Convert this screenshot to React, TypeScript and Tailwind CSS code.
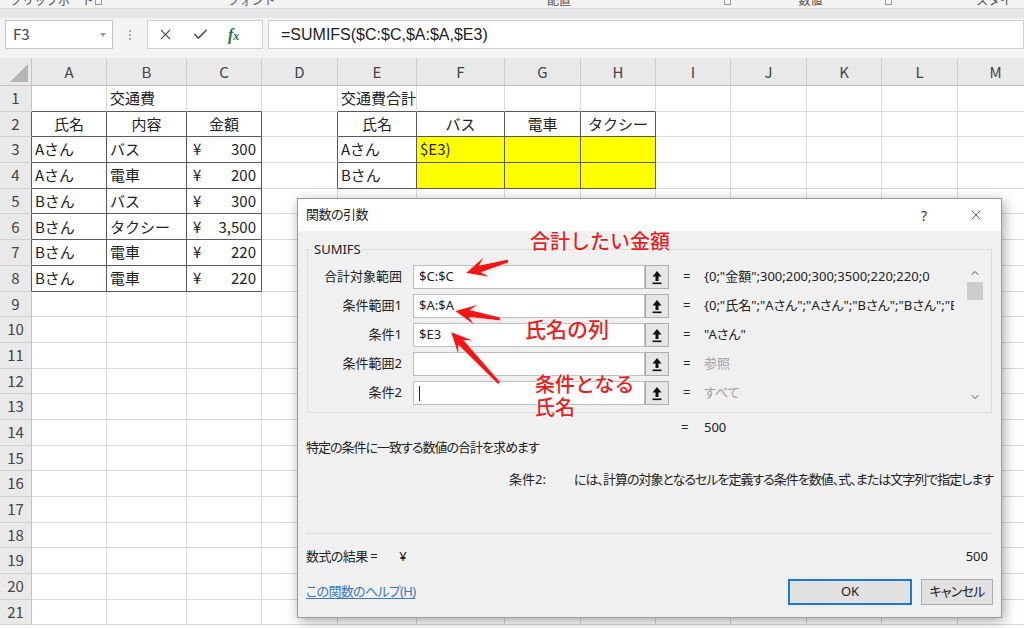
import clsx from "clsx";
import { Check, ChevronDown, ChevronUp, X } from "lucide-react";

const GRID =
  "grid grid-cols-[32px_75px_80px_75px_76px_79px_88px_76px_75px_75px_76px_75px_76px_76px]";
const LETTERS = ["A", "B", "C", "D", "E", "F", "G", "H", "I", "J", "K", "L", "M"];

type CellData = { t?: string; align?: "c" | "r"; yen?: string };

const DATA: Record<string, CellData> = {
  B1: { t: "交通費" },
  E1: { t: "交通費合計" },
  A2: { t: "氏名", align: "c" },
  B2: { t: "内容", align: "c" },
  C2: { t: "金額", align: "c" },
  E2: { t: "氏名", align: "c" },
  F2: { t: "バス", align: "c" },
  G2: { t: "電車", align: "c" },
  H2: { t: "タクシー", align: "c" },
  A3: { t: "Aさん" },
  B3: { t: "バス" },
  C3: { yen: "300" },
  A4: { t: "Aさん" },
  B4: { t: "電車" },
  C4: { yen: "200" },
  A5: { t: "Bさん" },
  B5: { t: "バス" },
  C5: { yen: "300" },
  A6: { t: "Bさん" },
  B6: { t: "タクシー" },
  C6: { yen: "3,500" },
  A7: { t: "Bさん" },
  B7: { t: "電車" },
  C7: { yen: "220" },
  A8: { t: "Bさん" },
  B8: { t: "電車" },
  C8: { yen: "220" },
  E3: { t: "Aさん" },
  F3: { t: "$E3)" },
  E4: { t: "Bさん" },
};

// bordered tables: A2:C8 and E2:H4
const inBox = (c: number, r: number) =>
  (c >= 1 && c <= 3 && r >= 2 && r <= 8) || (c >= 5 && c <= 8 && r >= 2 && r <= 4);
const isYellow = (c: number, r: number) => c >= 6 && c <= 8 && r >= 3 && r <= 4;

const ARGS = [
  { label: "合計対象範囲", input: "$C:$C", value: '{0;"金額";300;200;300;3500;220;220;0' },
  { label: "条件範囲1", input: "$A:$A", value: '{0;"氏名";"Aさん";"Aさん";"Bさん";"Bさん";"B' },
  { label: "条件1", input: "$E3", value: '"Aさん"' },
  { label: "条件範囲2", input: "", value: "参照", muted: true },
  { label: "条件2", input: "", value: "すべて", muted: true, caret: true },
];

function RibbonStrip() {
  return (
    <div className="h-[8px] overflow-hidden flex bg-[#f3f3f3] text-[12px] leading-[16px] text-[#555]">
      <span className="ml-[10px] w-[85px] -mt-[8px]">クリップボード</span>
      <span className="w-[133px] -mt-[8px]">
        <span className="inline-block w-[7px] h-[7px] border border-[#999]" />
      </span>
      <span className="w-[320px] -mt-[8px]">フォント</span>
      <span className="w-[177px] -mt-[8px]">配置</span>
      <span className="w-[75px] -mt-[8px]">
        <span className="inline-block w-[7px] h-[7px] border border-[#999]" />
      </span>
      <span className="w-[87px] -mt-[8px]">数値</span>
      <span className="w-[91px] -mt-[8px]">
        <span className="inline-block w-[7px] h-[7px] border border-[#999]" />
      </span>
      <span className="-mt-[8px]">スタイル</span>
    </div>
  );
}

function FormulaBar() {
  return (
    <div className="h-[34px] bg-[#f3f3f3] flex items-start pt-[2px]">
      <div className="ml-[5px] w-[108px] h-[29px] bg-white border border-[#c6c6c6] flex items-center justify-between pl-[7px] pr-[6px] text-[15px] text-[#444]">
        <span>F3</span>
        <span className="w-0 h-0 border-l-[3px] border-r-[3px] border-t-[4px] border-l-transparent border-r-transparent border-t-[#999]" />
      </div>
      <div className="w-[34px] h-[29px] flex flex-col items-center justify-center gap-[2px]">
        <span className="w-[2px] h-[2px] bg-[#aaa]" />
        <span className="w-[2px] h-[2px] bg-[#aaa]" />
        <span className="w-[2px] h-[2px] bg-[#aaa]" />
      </div>
      <div className="w-[116px] h-[29px] bg-white border border-[#d0d0d0] flex items-center pl-[9px]">
        <X size={17} strokeWidth={1.6} className="text-[#555]" />
        <Check size={17} strokeWidth={2.4} className="text-[#555] ml-[18px]" />
        <span className="ml-[19px] font-['Liberation_Serif',serif] italic text-[16px] text-[#217346] font-bold">
          f<span className="text-[12px]">x</span>
        </span>
      </div>
      <div className="ml-[5px] flex-1 h-[29px] bg-white border border-[#d0d0d0] flex items-center pl-[12px] text-[16px] text-[#222] font-['Liberation_Sans','Noto_Sans_CJK_JP',sans-serif]">
        =SUMIFS($C:$C,$A:$A,$E3)
      </div>
    </div>
  );
}

function HeaderRow() {
  return (
    <div className={GRID}>
      <div className="h-[28px] bg-[#e9e9e9] border-r border-b border-[#c4c4c4] flex items-end justify-end pr-[3px] pb-[3px]">
        <span className="w-0 h-0 border-l-[18px] border-t-[18px] border-l-transparent border-t-transparent border-b-0 border-r-[0px] border-b-[#b5b5b5] [border-bottom-width:18px]" />
      </div>
      {LETTERS.map((L) => (
        <div
          key={L}
          className="h-[28px] bg-[#e9e9e9] border-r border-r-[#cdcdcd] border-b border-b-[#b9b9b9] flex items-center justify-center pt-[2px] text-[15px] text-[#444]"
        >
          {L}
        </div>
      ))}
    </div>
  );
}

function Cell({ c, r }: { c: number; r: number }) {
  const d = DATA[LETTERS[c - 1] + r];
  const right = inBox(c, r) || inBox(c + 1, r);
  const bottom = inBox(c, r) || inBox(c, r + 1);
  return (
    <div
      className={clsx(
        "h-[25.7px] border-r border-b flex items-center whitespace-nowrap text-[15px] text-[#222]",
        right ? "border-r-[#595959]" : "border-r-[#dadada]",
        bottom ? "border-b-[#595959]" : "border-b-[#dadada]",
        isYellow(c, r) ? "bg-[#ffff00]" : "bg-white",
        d?.align === "c" ? "justify-center" : d?.yen ? "justify-between pl-[6px] pr-[5px]" : "pl-[3px]"
      )}
    >
      {d?.yen ? (
        <>
          <span>¥</span>
          <span>{d.yen}</span>
        </>
      ) : (
        d?.t
      )}
    </div>
  );
}

function SheetRow({ r }: { r: number }) {
  return (
    <div className={GRID}>
      <div
        className={clsx(
          "h-[25.7px] bg-[#e9e9e9] border-b border-b-[#d0d0d0] border-r flex items-center justify-center text-[15px] text-[#444]",
          inBox(1, r) ? "border-r-[#595959]" : "border-r-[#c4c4c4]"
        )}
      >
        {r}
      </div>
      {LETTERS.map((L, i) => (
        <Cell key={L} c={i + 1} r={r} />
      ))}
    </div>
  );
}

function RefIcon() {
  return (
    <svg width="10" height="15" viewBox="0 0 10 15">
      <polygon points="5,1 9.5,6.5 6.5,6.5 6.5,11 3.5,11 3.5,6.5 0.5,6.5" fill="#111" />
      <rect x="0.5" y="12.5" width="9" height="1.6" fill="#111" />
    </svg>
  );
}

function Dialog() {
  return (
    <div className="absolute left-[297px] top-[198px] w-[705px] h-[420px] bg-[#f0f0f0] border border-[#9a9a9a] shadow-[2px_3px_12px_rgba(0,0,0,0.35)] flex flex-col font-['Noto_Sans','Noto_Sans_CJK_JP',sans-serif] [font-feature-settings:'palt'] text-[13px] text-[#222]">
      <div className="h-[32px] bg-white flex items-center pl-[8px] pr-[17px]">
        <span className="flex-1 tracking-[-0.5px]">関数の引数</span>
        <span className="text-[14px] text-[#333] mr-[41px]">?</span>
        <X size={16} strokeWidth={1.2} className="text-[#333]" />
      </div>
      <div className="flex-1 flex flex-col px-[8px] pt-[9px]">
        <fieldset className="mx-[1px] border border-[#dcdcdc] pl-[1px] pt-[7px] pb-[7px]">
          <legend className="ml-[4px] px-[1px] leading-[18px]">SUMIFS</legend>
          <div className="flex">
            <div className="flex flex-col gap-[5px]">
              {ARGS.map((a) => (
                <div key={a.label} className="flex items-center h-[24px]">
                  <div className="w-[93px] text-right">{a.label}</div>
                  <div className="ml-[11px] w-[232px] h-[24px] bg-white border border-[#bcbcbc] flex items-center pl-[5px]">
                    {a.caret ? <span className="w-[1px] h-[15px] bg-[#222]" /> : a.input}
                  </div>
                  <div className="w-[24px] h-[24px] bg-[#e6e6e6] border border-[#adadad] flex items-center justify-center">
                    <RefIcon />
                  </div>
                  <div className="w-[35px] pl-[14px]">=</div>
                  <div
                    className={clsx(
                      "w-[250px] overflow-hidden whitespace-nowrap",
                      a.muted && "text-[#a0a0a0]"
                    )}
                  >
                    {a.value}
                  </div>
                </div>
              ))}
            </div>
            <div className="ml-[11px] w-[19px] flex flex-col items-center">
              <ChevronUp size={12} strokeWidth={2} className="text-[#505050] mt-[2px]" />
              <div className="mt-[3px] w-[16px] h-[18px] bg-[#cdcdcd]" />
              <div className="flex-1" />
              <ChevronDown size={12} strokeWidth={2} className="text-[#505050] mb-[2px]" />
            </div>
          </div>
        </fieldset>
        <div className="mt-[5px] leading-[18px] flex">
          <span className="ml-[375px] w-[23px]">=</span>
          <span>500</span>
        </div>
        <div className="mt-[2px] leading-[18px] tracking-[-1px]">特定の条件に一致する数値の合計を求めます</div>
        <div className="mt-[14px] leading-[18px] flex justify-end">
          <span className="mr-[28px]">条件2:</span>
          <span className="tracking-[-1px]">
            には、計算の対象となるセルを定義する条件を数値、式、または文字列で指定します
          </span>
        </div>
        <div className="mt-[45px] h-[1px] bg-[#dcdcdc]" />
        <div className="mt-[13px] leading-[18px] flex pr-[5px]">
          <span className="tracking-[-0.6px]">数式の結果 =</span>
          <span className="ml-[22px] flex-1">¥</span>
          <span>500</span>
        </div>
        <div className="mt-[14px] flex items-center">
          <span className="flex-1 text-[#3a78c0] underline underline-offset-2 tracking-[-0.7px]">
            この関数のヘルプ(H)
          </span>
          <button className="w-[124px] h-[26px] bg-[#e1e1e1] border border-[#1b79d6] shadow-[inset_0_0_0_1px_#1b79d6]">
            OK
          </button>
          <button className="ml-[9px] w-[72px] h-[26px] bg-[#e1e1e1] border border-[#adadad] tracking-[-0.8px]">
            キャンセル
          </button>
        </div>
      </div>
    </div>
  );
}

function arrowPoints(x1: number, y1: number, x2: number, y2: number) {
  const dx = x2 - x1;
  const dy = y2 - y1;
  const len = Math.hypot(dx, dy);
  const ux = dx / len;
  const uy = dy / len;
  const nx = -uy;
  const ny = ux;
  const head = 21;
  const hw = 10;
  const sw = 3.5;
  const tw = 1.5;
  const nkx = x2 - ux * head * 0.7;
  const nky = y2 - uy * head * 0.7;
  const bx = x2 - ux * head;
  const by = y2 - uy * head;
  const pts = [
    [x1 + nx * tw, y1 + ny * tw],
    [nkx + nx * sw, nky + ny * sw],
    [bx + nx * hw, by + ny * hw],
    [x2, y2],
    [bx - nx * hw, by - ny * hw],
    [nkx - nx * sw, nky - ny * sw],
    [x1 - nx * tw, y1 - ny * tw],
  ];
  return pts.map((p) => p.map((v) => v.toFixed(1)).join(",")).join(" ");
}

function Annotations() {
  const label =
    "absolute text-[#ee1d1d] font-medium [text-shadow:0_0_3px_#fff,0_0_3px_#fff,0_0_2px_#fff] whitespace-nowrap";
  return (
    <>
      <svg className="absolute left-0 top-0 pointer-events-none" width="1024" height="628">
        <defs>
          <filter id="glow" x="-20%" y="-20%" width="140%" height="140%">
            <feDropShadow dx="0" dy="0" stdDeviation="1.5" floodColor="#fff" floodOpacity="0.9" />
            <feDropShadow dx="1" dy="1" stdDeviation="1.2" floodColor="#000" floodOpacity="0.25" />
          </filter>
        </defs>
        <g fill="#f21414" filter="url(#glow)">
          <polygon points={arrowPoints(508, 261, 466, 273)} />
          <polygon points={arrowPoints(500, 319, 455, 311)} />
          <polygon points={arrowPoints(499, 383, 451, 332)} />
        </g>
      </svg>
      <div className={clsx(label, "left-[530px] top-[228px] text-[20px] leading-[26px]")}>合計したい金額</div>
      <div className={clsx(label, "left-[525px] top-[314px] text-[21px] leading-[28px]")}>氏名の列</div>
      <div className={clsx(label, "left-[535px] top-[372px] text-[20px] leading-[23px]")}>
        条件となる
        <br />
        氏名
      </div>
    </>
  );
}

export default function App() {
  const rows = Array.from({ length: 21 }, (_, i) => i + 1);
  return (
    <div className="relative w-[1024px] h-[628px] overflow-hidden bg-white font-['Noto_Sans_CJK_JP',sans-serif]">
      <RibbonStrip />
      <div className="h-[10px] bg-[#e6e6e6] border-t border-[#d6d6d6]" />
      <FormulaBar />
      <div className="h-[6px] bg-[#f3f3f3]" />
      <HeaderRow />
      {rows.map((r) => (
        <SheetRow key={r} r={r} />
      ))}
      <Dialog />
      <Annotations />
    </div>
  );
}
